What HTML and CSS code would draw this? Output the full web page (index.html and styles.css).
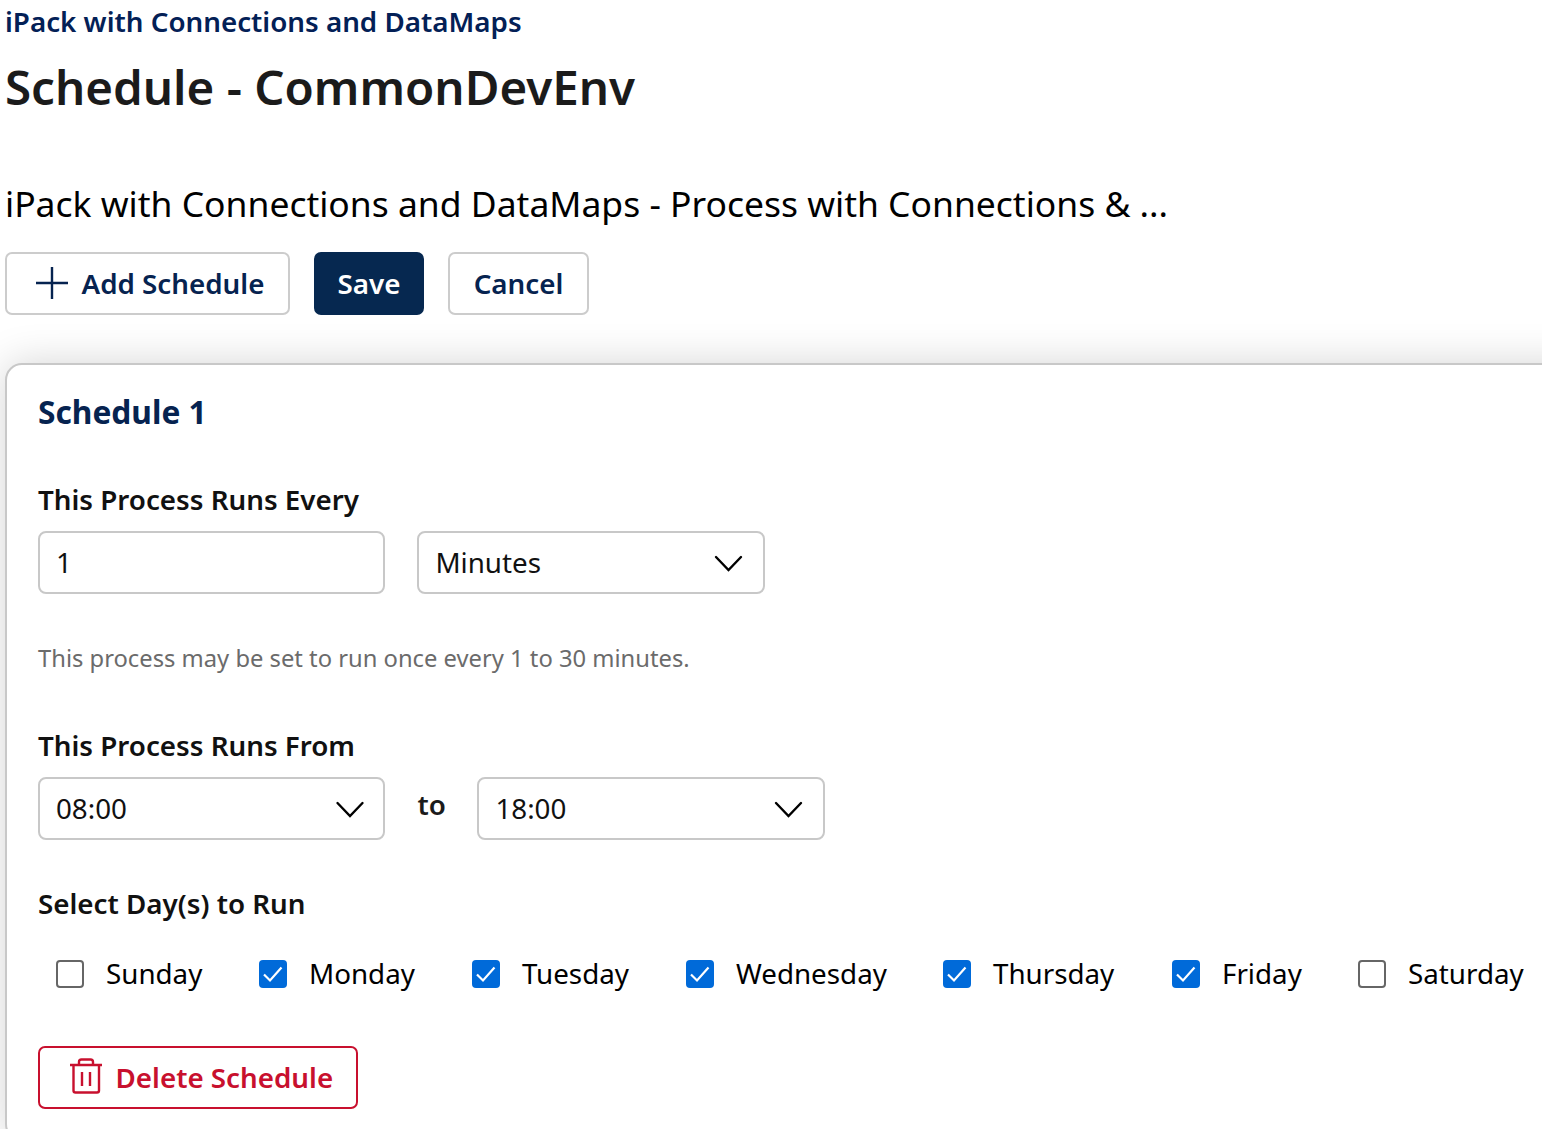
FILE: index.html
```html
<!DOCTYPE html>
<html lang="en">
<head>
<meta charset="utf-8">
<title>Schedule - CommonDevEnv</title>
<link rel="stylesheet" href="styles.css">
</head>
<body>
<main class="page">
  <a class="crumb"><span>iPack with Connections and DataMaps</span></a>
  <h1 class="title"><span>Schedule - CommonDevEnv</span></h1>
  <p class="subtitle"><span>iPack with Connections and DataMaps - Process with Connections &amp; ...</span></p>
  <div class="actions">
    <button class="btn btn-add"><svg width="34" height="34" viewBox="0 0 34 34"><path d="M17 1V33M1 17H33"/></svg><span>Add Schedule</span></button>
    <button class="btn btn-save"><span>Save</span></button>
    <button class="btn btn-cancel"><span>Cancel</span></button>
  </div>
  <section class="card">
    <h2 class="card-title"><span>Schedule 1</span></h2>
    <h3 class="label label-every"><span>This Process Runs Every</span></h3>
    <div class="fields">
      <div class="field field-number"><span>1</span></div>
      <div class="field"><span>Minutes</span><svg class="chevron" width="30" height="18" viewBox="0 0 30 18"><path d="M2 3L14.500 16L27 3"/></svg></div>
    </div>
    <p class="hint"><span>This process may be set to run once every 1 to 30 minutes.</span></p>
    <h3 class="label label-from"><span>This Process Runs From</span></h3>
    <div class="fields">
      <div class="field"><span>08:00</span><svg class="chevron" width="30" height="18" viewBox="0 0 30 18"><path d="M2.500 3L15 16L27.500 3"/></svg></div>
      <span class="to">to</span>
      <div class="field"><span>18:00</span><svg class="chevron" width="30" height="18" viewBox="0 0 30 18"><path d="M2 3L14.500 16L27 3"/></svg></div>
    </div>
    <h3 class="label label-days"><span>Select Day(s) to Run</span></h3>
    <div class="days">
      <label class="day"><span class="box"></span><span>Sunday</span></label>
      <label class="day"><span class="box checked"><svg width="28" height="28" viewBox="0 0 28 28"><path d="M5 14.500L11 20.500L22.500 7.500"/></svg></span><span>Monday</span></label>
      <label class="day"><span class="box checked"><svg width="28" height="28" viewBox="0 0 28 28"><path d="M5 14.500L11 20.500L22.500 7.500"/></svg></span><span>Tuesday</span></label>
      <label class="day"><span class="box checked"><svg width="28" height="28" viewBox="0 0 28 28"><path d="M5 14.500L11 20.500L22.500 7.500"/></svg></span><span>Wednesday</span></label>
      <label class="day"><span class="box checked"><svg width="28" height="28" viewBox="0 0 28 28"><path d="M5 14.500L11 20.500L22.500 7.500"/></svg></span><span>Thursday</span></label>
      <label class="day"><span class="box checked"><svg width="28" height="28" viewBox="0 0 28 28"><path d="M5 14.500L11 20.500L22.500 7.500"/></svg></span><span>Friday</span></label>
      <label class="day"><span class="box"></span><span>Saturday</span></label>
    </div>
    <button class="btn btn-delete"><svg width="32" height="36" viewBox="0 0 32 36"><path d="M0 7H32M3.500 7V32.500Q3.500 34.500 5.500 34.500H27Q29 34.500 29 32.500V7M9 7V4Q9 1.500 11.500 1.500H20.500Q23 1.500 23 4V7M12 14V28M20 14V28"/></svg><span>Delete Schedule</span></button>
  </section>
</main>
</body>
</html>
```
FILE: styles.css
```css
* { box-sizing: border-box; }
body {
  margin: 0;
  background: #fff;
  color: #1b1b1b;
  font: 27.75px/40px "Noto Sans", sans-serif;
}
.page { height: 1129px; overflow: hidden; padding-left: 5px; white-space: nowrap; }
h1, h2, h3, p { margin: 0; }
svg { display: block; flex: none; fill: none; stroke: currentColor; }
.crumb { display: block; height: 41px; padding-top: 1px; color: #032056; font-size: 27.75px; font-weight: 600; }
.title { margin-top: 14px; font-size: 47.5px; line-height: 64px; font-weight: 600; }
.subtitle { margin-top: 60px; font-size: 35.48px; line-height: 48px; color: #000; }
.actions { display: flex; gap: 24px; margin-top: 25px; }
.btn {
  display: flex;
  align-items: center;
  justify-content: center;
  height: 63px;
  padding: 0 0 2px;
  border: 2px solid #ccc;
  border-radius: 7px;
  background: #fff;
  color: #062350;
  font: 600 27.75px/40px "Noto Sans", sans-serif;
}
.btn-add { width: 285px; justify-content: flex-start; padding-left: 28px; gap: 12.5px; }
.btn-add svg { stroke-width: 2.4; }
.btn-save { width: 110px; background: #062850; border-color: #062850; color: #fff; }
.btn-cancel { width: 141px; }
.card {
  width: 1600px;
  height: 778px;
  margin-top: 48px;
  padding: 27px 0 0 31px;
  border: 2px solid #c8c8c8;
  border-radius: 17px;
  background: #fff;
  box-shadow: 0 0 40px rgba(0, 0, 0, .17);
}
.card-title { color: #062350; font-size: 31.7px; line-height: 40px; font-weight: 700; }
.label { font-size: 27.75px; line-height: 40px; font-weight: 600; color: #111; }
.label-every { margin-top: 47px; }
.fields { display: flex; gap: 32px; margin-top: 12px; }
.field {
  display: flex;
  align-items: center;
  justify-content: space-between;
  width: 347.4px;
  height: 63px;
  padding: 0 18.5px 0 16px;
  border: 2px solid #c8c8c8;
  border-radius: 8px;
  color: #111;
}
.field span { margin-top: -1px; }
.chevron { stroke: #000; stroke-width: 2.4; stroke-linecap: round; }
.to { width: 28px; margin: 7px 0; font-weight: 600; }
.hint { margin-top: 44px; font-size: 23.76px; line-height: 40px; color: #6b6b6b; }
.label-from { margin-top: 47px; }
.label-days { margin-top: 43px; }
.days { display: grid; grid-template-columns: 203px 213px 214px 257px 229px 186px 180px; padding-left: 18px; margin-top: 31px; color: #000; }
.day { display: flex; align-items: center; gap: 22px; }
.day > span:last-child { margin: -1px 0 1px; }
.box { width: 28px; height: 28px; flex: none; border: 2px solid #666; border-radius: 4px; }
.box.checked { border: 0; background: #006ad9; color: #fff; stroke-width: 2.2; }
.btn-delete { width: 320px; margin-top: 52px; justify-content: flex-start; padding-left: 30px; gap: 13.5px; border-color: #c8102e; color: #c8102e; }
.btn-delete svg { stroke-width: 2.4; margin-top: -2px; }
```
